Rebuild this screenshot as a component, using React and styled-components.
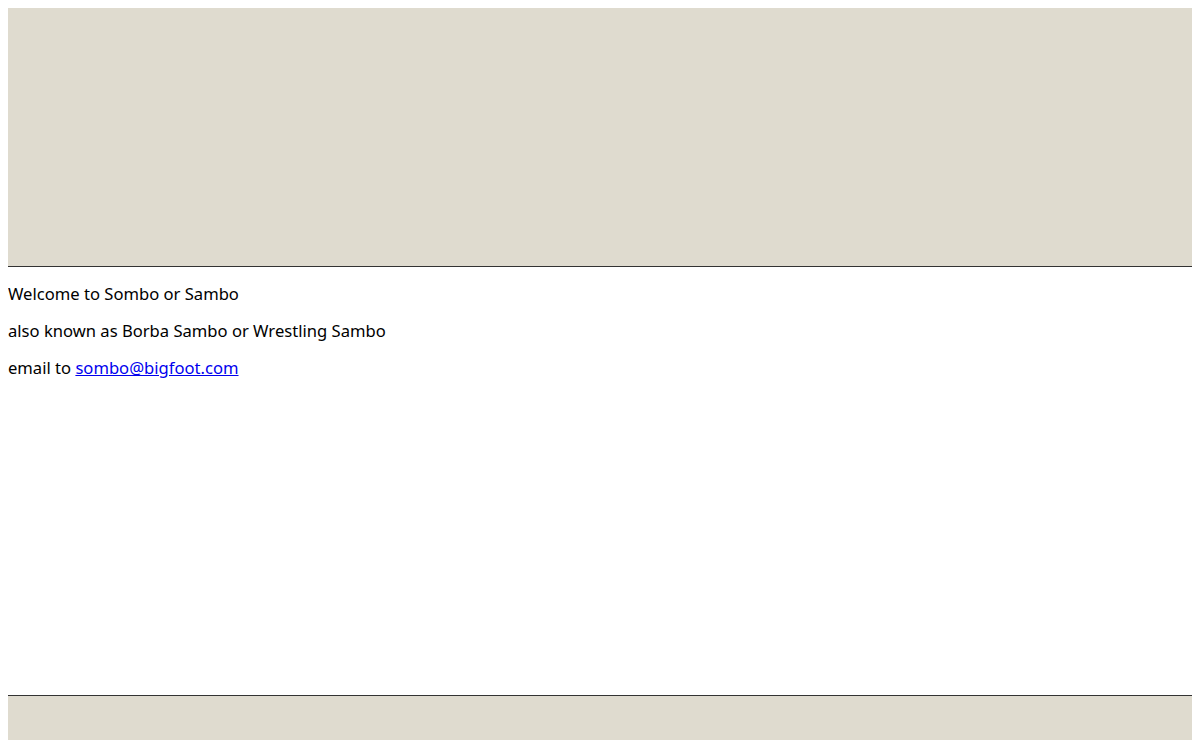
import styled, { createGlobalStyle } from 'styled-components';

const GlobalStyle = createGlobalStyle`
  body {
    margin: 8px;
    background: #ffffff;
    font-family: 'Noto Sans', 'Open Sans', sans-serif;
    font-size: 16.6px;
    color: #000000;
  }
`;

const Header = styled.header`
  height: 258px;
  background: #dfdbcf;
  border-bottom: 1px solid #333333;
`;

const Main = styled.main`
  display: flow-root;
  height: 428px;
`;

const Paragraph = styled.p`
  margin: 16px 0;
  line-height: 21px;
`;

const MailLink = styled.a`
  color: #0000ee;
  text-decoration: underline;
`;

const Footer = styled.footer`
  height: 60px;
  background: #dfdbcf;
  border-top: 1px solid #333333;
`;

const App = () => (
  <>
    <GlobalStyle />
    <Header />
    <Main>
      <Paragraph>Welcome to Sombo or Sambo</Paragraph>
      <Paragraph>also known as Borba Sambo or Wrestling Sambo</Paragraph>
      <Paragraph>
        email to <MailLink href="mailto:sombo@bigfoot.com">sombo@bigfoot.com</MailLink>
      </Paragraph>
    </Main>
    <Footer />
  </>
);

export default App;
